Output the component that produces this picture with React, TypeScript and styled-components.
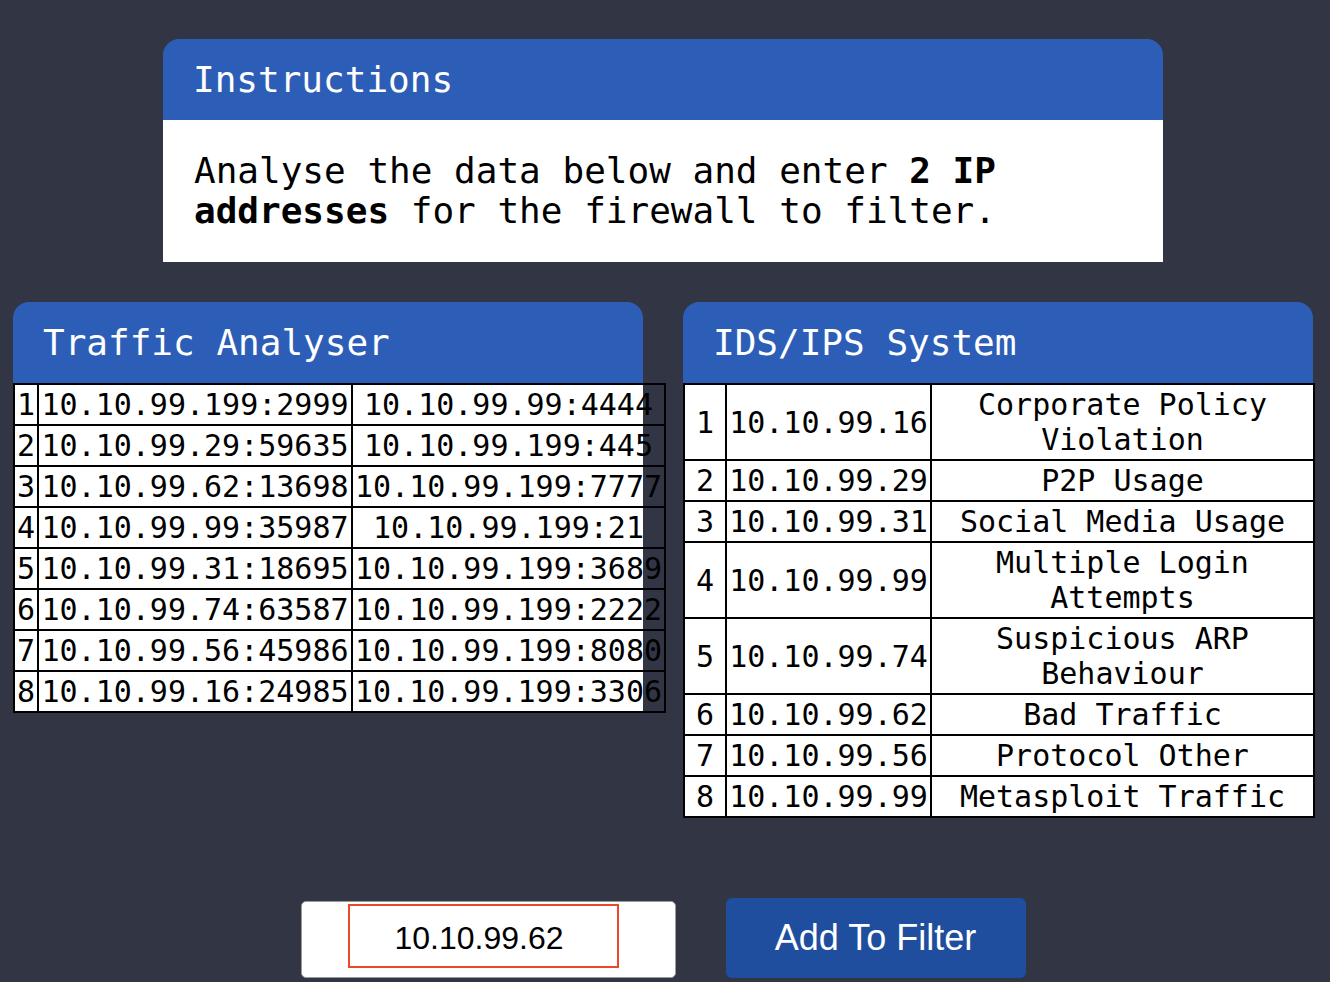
import React from "react";
import styled, { createGlobalStyle } from "styled-components";

const GlobalStyle = createGlobalStyle`
  html, body {
    margin: 0;
    padding: 0;
    background: #323543;
  }
  body {
    font-family: "DejaVu Sans Mono", "Liberation Mono", monospace;
  }
  * { box-sizing: border-box; }
`;

const Page = styled.div`
  width: 1300px;
  margin-left: 13px;
  padding-top: 39px;
  display: flex;
  flex-direction: column;
  align-items: center;
`;

const Card = styled.section<{ $width: number }>`
  width: ${(p) => p.$width}px;
`;

const CardHeader = styled.header`
  height: 81px;
  background: #2c5eb7;
  border-radius: 16px 16px 0 0;
  display: flex;
  align-items: center;
  padding: 0 31px 0 30px;
  color: #ffffff;
  font-family: "DejaVu Sans Mono", monospace;
  font-size: 36px;
  line-height: 40px;
  font-weight: normal;
`;

const CardBody = styled.div`
  background: #ffffff;
`;

const InstructionBody = styled.p`
  margin: 0;
  padding: 31px 31px;
  background: #ffffff;
  font-family: "DejaVu Sans Mono", monospace;
  font-size: 36px;
  line-height: 40px;
  color: #000;
`;

const PanelRow = styled.div`
  margin-top: 40px;
  width: 100%;
  display: flex;
  gap: 40px;
  align-items: flex-start;
`;

const DataTable = styled.table<{ $width: number }>`
  width: ${(p) => p.$width}px;
  table-layout: fixed;
  border-collapse: collapse;
  border: 2px solid #000;
  font-family: "DejaVu Sans Mono", monospace;
  font-size: 30px;
  line-height: 35px;
  color: #000;
`;

const Cell = styled.td`
  border: 2px solid #000;
  padding: 2px 0;
  text-align: center;
  vertical-align: middle;
  white-space: pre-wrap;
`;

const FilterRow = styled.div`
  margin-top: 80px;
  display: flex;
  align-items: flex-end;
  gap: 50px;
`;

const InputFrame = styled.div`
  width: 375px;
  height: 77px;
  background: #ffffff;
  border: 1.5px solid #9a9a9a;
  border-radius: 5px;
  padding: 2px 0 0 46px;
`;

const IpInput = styled.input`
  width: 271px;
  height: 64px;
  border: 2.5px solid #ea4a2b;
  border-radius: 0;
  outline: none;
  background: #fff;
  font-family: "Liberation Sans", Arial, sans-serif;
  font-size: 32px;
  color: #000;
  text-align: center;
  padding: 4px 8px 0 0;
`;

const FilterButton = styled.button`
  width: 300px;
  height: 80px;
  border: none;
  border-radius: 6px;
  background: #204e9e;
  color: #ffffff;
  font-family: "Liberation Sans", Arial, sans-serif;
  font-size: 36px;
  cursor: pointer;
  padding: 0;
`;

const traffic = [
  ["10.10.99.199:2999", "10.10.99.99:4444"],
  ["10.10.99.29:59635", "10.10.99.199:445"],
  ["10.10.99.62:13698", "10.10.99.199:7777"],
  ["10.10.99.99:35987", "10.10.99.199:21"],
  ["10.10.99.31:18695", "10.10.99.199:3689"],
  ["10.10.99.74:63587", "10.10.99.199:2222"],
  ["10.10.99.56:45986", "10.10.99.199:8080"],
  ["10.10.99.16:24985", "10.10.99.199:3306"],
];

const ids = [
  ["10.10.99.16", "Corporate Policy Violation"],
  ["10.10.99.29", "P2P Usage"],
  ["10.10.99.31", "Social Media Usage"],
  ["10.10.99.99", "Multiple Login Attempts"],
  ["10.10.99.74", "Suspicious ARP Behaviour"],
  ["10.10.99.62", "Bad Traffic"],
  ["10.10.99.56", "Protocol Other"],
  ["10.10.99.99", "Metasploit Traffic"],
];

export default function App() {
  return (
    <>
      <GlobalStyle />
      <Page>
        <Card $width={1000}>
          <CardHeader>Instructions</CardHeader>
          <InstructionBody>
            Analyse the data below and enter <b>2 IP addresses</b> for the firewall to filter.
          </InstructionBody>
        </Card>

        <PanelRow>
          <Card $width={630}>
            <CardHeader>Traffic Analyser</CardHeader>
            <CardBody>
              <DataTable $width={651}>
                <colgroup>
                  <col style={{ width: 24 }} />
                  <col style={{ width: 314 }} />
                  <col style={{ width: 313 }} />
                </colgroup>
                <tbody>
                  {traffic.map((r, i) => (
                    <tr key={i}>
                      <Cell>{i + 1}</Cell>
                      <Cell>{r[0]}</Cell>
                      <Cell>{r[1]}</Cell>
                    </tr>
                  ))}
                </tbody>
              </DataTable>
            </CardBody>
          </Card>

          <Card $width={630}>
            <CardHeader>IDS/IPS System</CardHeader>
            <CardBody>
              <DataTable $width={630}>
                <colgroup>
                  <col style={{ width: 42 }} />
                  <col style={{ width: 205 }} />
                  <col style={{ width: 383 }} />
                </colgroup>
                <tbody>
                  {ids.map((r, i) => (
                    <tr key={i}>
                      <Cell>{i + 1}</Cell>
                      <Cell>{r[0]}</Cell>
                      <Cell>{r[1]}</Cell>
                    </tr>
                  ))}
                </tbody>
              </DataTable>
            </CardBody>
          </Card>
        </PanelRow>

        <FilterRow>
          <InputFrame>
            <IpInput type="text" defaultValue="10.10.99.62" />
          </InputFrame>
          <FilterButton type="button">Add To Filter</FilterButton>
        </FilterRow>
      </Page>
    </>
  );
}
